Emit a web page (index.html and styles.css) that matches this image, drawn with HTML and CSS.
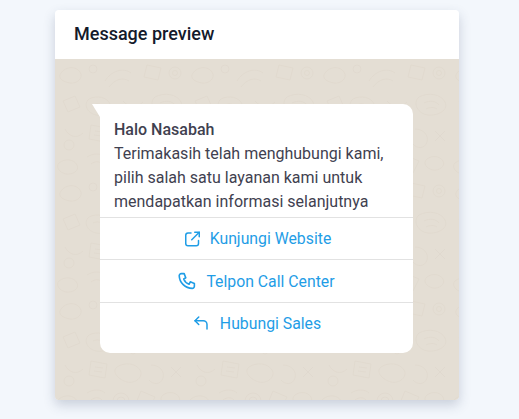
FILE: index.html
```html
<!DOCTYPE html>
<html lang="id">
<head>
<meta charset="utf-8">
<title>Message preview</title>
<link rel="stylesheet" href="styles.css">
</head>
<body>
<main class="card">
  <header class="card-head"><h1 class="title">Message preview</h1></header>
  <section class="chat">
    <svg class="doodles" width="404" height="341" aria-hidden="true">
      <defs>
        <pattern id="wa" width="132" height="118" patternUnits="userSpaceOnUse">
          <g fill="none" stroke="#d8d0c4" stroke-width="0.8">
            <path d="M6 14c5-7 15-7 19-1s-3 12-10 11-13-5-9-10z"/>
            <circle cx="38" cy="10" r="4"/>
            <path d="M50 22c6-10 18-14 26-8M54 28c6-8 14-10 20-6"/>
            <path d="M92 6l14 3-3 12-14-3z"/>
            <circle cx="120" cy="14" r="6"/><circle cx="120" cy="14" r="2.500"/>
            <path d="M8 42l12-5 5 11-12 5z"/>
            <path d="M34 40c8-4 18-2 21 5s-5 13-14 11-13-11-7-16z"/><path d="M38 46c4-2 9-1 11 2"/>
            <path d="M68 42c6 7 14 7 20 1"/>
            <circle cx="78" cy="56" r="3"/>
            <path d="M100 38c9-5 22-3 26 5s-7 14-17 13-16-12-9-18z"/><path d="M105 44c6-3 12-2 15 2M107 50c4-2 8-2 11 0"/>
            <path d="M10 70c4 8 12 10 18 4"/><circle cx="14" cy="86" r="5"/>
            <path d="M36 66l16 3-2 14-16-3z"/><path d="M40 72l8 1M39 76l8 1"/>
            <path d="M62 72c7-5 19-4 23 3s-5 14-13 12-16-10-10-15z"/>
            <path d="M96 70c8 0 14 6 12 13s-10 7-14 2"/>
            <path d="M116 72l10 10M126 72l-10 10"/>
            <path d="M4 104c6-5 15-4 18 2s-5 10-11 9-11-7-7-11z"/>
            <path d="M32 98c6-4 14-4 18 0M36 105c4-3 8-3 11 0"/>
            <circle cx="66" cy="106" r="8"/><circle cx="66" cy="106" r="4"/>
            <path d="M86 96l14 6-6 12-13-6z"/>
            <path d="M108 100c5-4 13-3 16 2s-4 10-10 9-11-7-6-11z"/>
          </g>
        </pattern>
      </defs>
      <rect width="404" height="341" fill="url(#wa)"/>
    </svg>
    <article class="bubble">
      <div class="message">
        <strong class="greeting">Halo Nasabah</strong>
        <p class="body-text">Terimakasih telah menghubungi kami, pilih salah satu layanan kami untuk mendapatkan informasi selanjutnya</p>
      </div>
      <a class="action">
        <svg class="icon" viewBox="-2 0 24 24" width="18" height="18" fill="none" stroke="currentColor" stroke-width="2" stroke-linecap="round" stroke-linejoin="round"><path d="M10 4H6a3 3 0 0 0-3 3v11a3 3 0 0 0 3 3h11a3 3 0 0 0 3-3v-4"/><path d="M15 3h6v6"/><path d="M21 3 11 13"/></svg>
        <span>Kunjungi Website</span>
      </a>
      <a class="action">
        <svg class="icon" viewBox="1 1 22 22" width="18" height="18" fill="none" stroke="currentColor" stroke-width="2" stroke-linecap="round" stroke-linejoin="round"><path d="M5 3h3.500l2 5-2.500 1.500a11 11 0 0 0 6.500 6.500L16 13l5 2v3.500a2.500 2.500 0 0 1-2.500 2.500A16 16 0 0 1 2.500 5.500 2.500 2.500 0 0 1 5 3z"/></svg>
        <span>Telpon Call Center</span>
      </a>
      <a class="action">
        <svg class="icon" viewBox="0 0 24 24" width="18" height="18" fill="none" stroke="currentColor" stroke-width="2" stroke-linecap="round" stroke-linejoin="round"><path d="M9 14 4 9l5-5"/><path d="M4 9h11a5 5 0 0 1 5 5v6"/></svg>
        <span>Hubungi Sales</span>
      </a>
    </article>
  </section>
</main>
</body>
</html>
```
FILE: styles.css
```css
* { box-sizing: border-box; }
html, body { height: 100%; }
body {
  margin: 0;
  padding: 10px 0 0 55px;
  background: #f3f7fc;
  font-family: Roboto, "Liberation Sans", sans-serif;
  overflow: hidden;
}
.card {
  width: 404px;
  height: 390px;
  display: flex;
  flex-direction: column;
  border-radius: 4px;
  overflow: hidden;
  box-shadow: 0 5px 12px rgba(50, 65, 100, 0.22);
}
.card-head {
  height: 49px;
  flex: none;
  display: flex;
  align-items: center;
  padding: 0 0 2px 19px;
  background: #fff;
}
.title {
  margin: 0;
  font-size: 18px;
  font-weight: 500;
  color: #141a2b;
}
.chat {
  position: relative;
  flex: 1;
  padding: 45px 46px 0 45px;
  background: #e4ded4;
}
.doodles { position: absolute; left: 0; top: 0; opacity: 0.4; }
.bubble {
  position: relative;
  width: 313px;
  height: 249px;
  display: flex;
  flex-direction: column;
  background: #fff;
  border-radius: 0 10px 10px 10px;
}
.bubble::before {
  content: "";
  position: absolute;
  left: -8px;
  top: 0;
  width: 8px;
  height: 13px;
  background: #fff;
  clip-path: polygon(0 0, 100% 0, 100% 100%);
}
.message {
  height: 113px;
  padding: 14px 14px 0;
  font-size: 16px;
  line-height: 24px;
  color: #3f4150;
}
.greeting { display: block; font-weight: 500; }
.body-text { margin: 0; }
.action {
  height: 42.4px;
  flex: none;
  display: flex;
  align-items: center;
  justify-content: center;
  gap: 10px;
  border-top: 1px solid #e2e2e2;
  color: #1f9de6;
  font-size: 15.8px;
}
.icon { flex: none; }
```
